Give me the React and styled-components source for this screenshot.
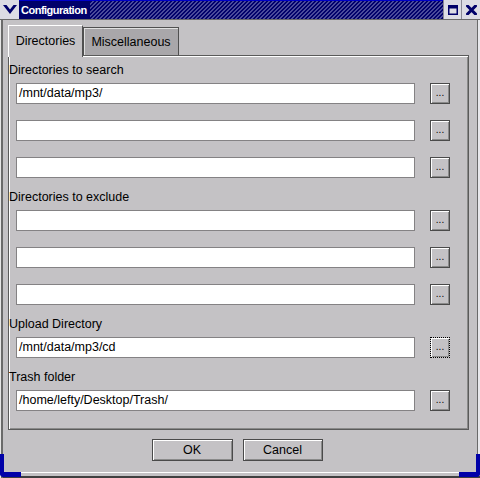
import React from 'react';
import styled, { createGlobalStyle } from 'styled-components';

const BG = '#c4c2c5';
const NAVY = '#00006a';

const Global = createGlobalStyle`
  html, body { margin: 0; padding: 0; background: ${BG}; }
  body { width: 480px; height: 478px; overflow: hidden; font-family: "Liberation Sans", Arial, sans-serif; }
`;

const Window = styled.div`
  position: relative;
  width: 480px;
  height: 478px;
  box-sizing: border-box;
  background: ${BG};
  display: flex;
  flex-direction: column;
  box-shadow:
    inset 1px 0 0 #e6e6e6,
    inset 3px 0 0 #6a6a6a,
    inset 0 -2px 0 #404040,
    inset 0 -5px 0 ${BG},
    inset 0 -6px 0 #ffffff,
    inset -2px 0 0 #e8e8ec,
    inset -3px 0 0 #6a6a6a;
  &::before, &::after {
    content: '';
    position: absolute;
    bottom: 1px;
    width: 17px;
    height: 18px;
    border-bottom: 5px solid #0000a8;
  }
  &::before {
    left: 0;
    border-left: 4px solid #0000a8;
    border-bottom-left-radius: 4px;
  }
  &::after {
    right: 0;
    border-right: 4px solid #0000a8;
    border-bottom-right-radius: 4px;
  }
`;

const TitleBar = styled.div`
  display: flex;
  height: 19px;
  border-bottom: 1px solid #6a6a6a;
  flex: 0 0 auto;
`;

const IconButton = styled.div`
  width: ${p => p.$w || 19}px;
  height: 19px;
  background: #dcdce4;
  display: flex;
  align-items: center;
  justify-content: center;
  box-sizing: border-box;
  border-left: ${p => (p.$sep ? '1px solid #8a8a96' : 'none')};
  flex: 0 0 auto;
`;

const TitleText = styled.div`
  background: ${NAVY};
  border-top: 1px solid #0000c8;
  color: #fff;
  font-weight: bold;
  font-size: 11px;
  letter-spacing: -0.5px;
  line-height: 18px;
  padding: 0 3px 0 2px;
  white-space: nowrap;
`;

const Hatch = styled.div`
  flex: 1;
  border-top: 1px solid #0000c8;
  background: repeating-linear-gradient(
    -45deg,
    ${NAVY} 0px,
    ${NAVY} 1.8px,
    #4a4a9a 1.8px,
    #4a4a9a 2.83px
  );
`;

const Body = styled.div`
  flex: 1;
  display: flex;
  flex-direction: column;
  padding: 5px 11px 0 8px;
`;

const TabBar = styled.div`
  display: flex;
  align-items: flex-end;
  height: 30px;
  position: relative;
  z-index: 1;
`;

const Tab = styled.div`
  box-sizing: border-box;
  font-size: 12.5px;
  color: #000;
  display: flex;
  align-items: center;
  justify-content: center;
  ${p =>
    p.$active
      ? `
    height: 32px;
    margin-bottom: -2px;
    width: 75px;
    background: ${BG};
    border-left: 1px solid #ffffff;
    border-top: 1px solid #ffffff;
    border-right: 1px solid #505050;
    padding-bottom: 2px;
  `
      : `
    height: 28px;
    width: 96px;
    background: #a9a7aa;
    border: 1px solid #505050;
    border-bottom: none;
    box-shadow: inset 1px 1px 0 #e0e0e0;
    padding-top: 1px;
  `}
`;

const Panel = styled.div`
  box-sizing: border-box;
  height: 375px;
  border: 1px solid #5a5a5a;
  box-shadow: inset 1px 1px 0 #ffffff, inset -1px -1px 0 #8a8a8a;
  padding: 7px 0 0 0;
  display: flex;
  flex-direction: column;
`;

const Label = styled.div`
  font-size: 12.5px;
  line-height: 14px;
  height: 14px;
  color: #000;
  margin-top: ${p => (p.$first ? 0 : 12)}px;
  margin-bottom: 6px;
  white-space: nowrap;
`;

const Rows = styled.div`
  display: flex;
  flex-direction: column;
  gap: 16px;
`;

const Row = styled.div`
  display: flex;
  align-items: center;
  gap: 15px;
  padding-left: 7px;
  height: 21px;
`;

const Input = styled.div`
  box-sizing: border-box;
  width: 399px;
  height: 21px;
  background: #fff;
  border: 1px solid #848284;
  font-size: 12.5px;
  line-height: 19px;
  padding-left: 2px;
  color: #000;
  white-space: nowrap;
  overflow: hidden;
`;

const Browse = styled.div`
  box-sizing: border-box;
  width: 20px;
  height: 21px;
  background: ${BG};
  border: 1px ${p => (p.$focus ? 'dotted #000' : 'solid #4a4a4a')};
  box-shadow: inset 1px 1px 0 #fff, inset -1px -1px 0 #8a8a8a;
  font-size: 10px;
  line-height: 10px;
  display: flex;
  align-items: flex-end;
  justify-content: center;
  padding-bottom: 5px;
  color: #000;
`;

const ButtonRow = styled.div`
  display: flex;
  justify-content: center;
  gap: 10px;
  padding-right: 3px;
  margin-top: 9px;
`;

const Button = styled.div`
  box-sizing: border-box;
  width: ${p => p.$w}px;
  height: 22px;
  background: ${BG};
  border: 1px solid #4a4a4a;
  box-shadow: inset 1px 1px 0 #fff, inset -1px -1px 0 #8a8a8a;
  font-size: 12.5px;
  display: flex;
  align-items: center;
  justify-content: center;
  color: #000;
`;

const sections = [
  { label: 'Directories to search', values: ['/mnt/data/mp3/', '', ''] },
  { label: 'Directories to exclude', values: ['', '', ''] },
  { label: 'Upload Directory', values: ['/mnt/data/mp3/cd'], focus: true },
  { label: 'Trash folder', values: ['/home/lefty/Desktop/Trash/'] },
];

export default function App() {
  return (
    <>
      <Global />
      <Window>
        <TitleBar>
          <IconButton>
            <svg width="14" height="10" viewBox="0 0 14 10">
              <polygon points="0,0 3.5,0 7,4.5 10.5,0 14,0 7,9" fill={NAVY} />
            </svg>
          </IconButton>
          <TitleText>Configuration</TitleText>
          <Hatch />
          <IconButton $w={18} $sep>
            <svg width="10" height="10" viewBox="0 0 10 10">
              <rect x="0.75" y="0.75" width="8.5" height="8.5" fill="none" stroke={NAVY} strokeWidth="1.5" />
              <rect x="0" y="0" width="10" height="3.5" fill={NAVY} />
            </svg>
          </IconButton>
          <IconButton $w={19} $sep>
            <svg width="11" height="10" viewBox="0 0 11 10">
              <path d="M1.5 1 L9.5 9 M9.5 1 L1.5 9" stroke={NAVY} strokeWidth="3" strokeLinecap="square" />
            </svg>
          </IconButton>
        </TitleBar>
        <Body>
          <TabBar>
            <Tab $active>Directories</Tab>
            <Tab>Miscellaneous</Tab>
          </TabBar>
          <Panel>
            {sections.map((s, i) => (
              <React.Fragment key={s.label}>
                <Label $first={i === 0}>{s.label}</Label>
                <Rows>
                  {s.values.map((v, j) => (
                    <Row key={j}>
                      <Input>{v}</Input>
                      <Browse $focus={s.focus}>...</Browse>
                    </Row>
                  ))}
                </Rows>
              </React.Fragment>
            ))}
          </Panel>
          <ButtonRow>
            <Button $w={81}>OK</Button>
            <Button $w={80}>Cancel</Button>
          </ButtonRow>
        </Body>
      </Window>
    </>
  );
}
